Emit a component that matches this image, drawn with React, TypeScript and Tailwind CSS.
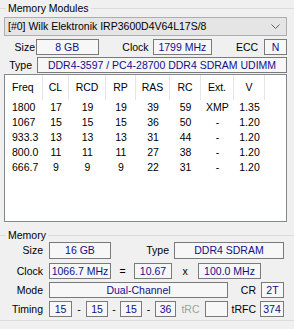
import React from "react";

const font = { fontFamily: '"Liberation Sans", Arial, sans-serif' };

const Box = ({ children, className = "" }: { children?: React.ReactNode; className?: string }) => (
  <div
    className={`h-full flex items-center justify-center border border-[#7a7a7a] bg-[#f7f7f7] text-[#10108a] whitespace-nowrap ${className}`}
  >
    {children}
  </div>
);

const Label = ({ children, className = "" }: { children: React.ReactNode; className?: string }) => (
  <span className={`shrink-0 whitespace-nowrap text-black ${className}`}>{children}</span>
);

const cols = ["Freq", "CL", "RCD", "RP", "RAS", "RC", "Ext.", "V"];
const widths = ["w-[38px]", "w-[26px]", "w-[37px]", "w-[30px]", "w-[34px]", "w-[31px]", "w-[33px]", "w-[31px]"];
const rows = [
  ["1800", "17", "19", "19", "39", "59", "XMP", "1.35"],
  ["1067", "15", "15", "15", "36", "50", "-", "1.20"],
  ["933.3", "13", "13", "13", "31", "44", "-", "1.20"],
  ["800.0", "11", "11", "11", "27", "38", "-", "1.20"],
  ["666.7", "9", "9", "9", "22", "31", "-", "1.20"],
];

export default function App() {
  return (
    <div className="w-[294px] h-[329px] bg-[#f0f0f0] text-[10.5px] leading-none overflow-hidden" style={font}>
      {/* Memory Modules */}
      <div className="relative h-[17px] flex items-center">
        <div className="absolute left-0 right-0 top-[8px] h-px bg-[#dcdcdc]" />
        <span className="relative ml-[6px] px-[2px] bg-[#f0f0f0] text-black">Memory Modules</span>
      </div>
      <div className="ml-[4px] w-[283px]">
        <div className="h-[19px] flex items-center justify-between border border-[#adadad] bg-[#e5e5e5] pl-[3px] pr-[6px]">
          <span className="text-black">[#0] Wilk Elektronik IRP3600D4V64L17S/8</span>
          <svg width="9" height="5" viewBox="0 0 9 5">
            <path d="M0.5 0.5 L4.5 4.5 L8.5 0.5" fill="none" stroke="#606060" strokeWidth="1" />
          </svg>
        </div>

        <div className="mt-[3px] h-[16px] flex items-center">
          <Label className="w-[31px] text-right">Size</Label>
          <div className="ml-[1px] w-[63px] h-full"><Box>8 GB</Box></div>
          <Label className="w-[50px] text-right">Clock</Label>
          <div className="ml-[4px] w-[60px] h-full"><Box>1799 MHz</Box></div>
          <Label className="w-[46px] text-right">ECC</Label>
          <div className="ml-[6px] w-[23px] h-full"><Box>N</Box></div>
        </div>

        <div className="mt-[2px] h-[16px] flex items-center">
          <Label className="w-[28px] text-right">Type</Label>
          <div className="ml-[5px] flex-1 h-full"><Box>DDR4-3597 / PC4-28700 DDR4 SDRAM UDIMM</Box></div>
        </div>

        <div className="mt-[1px] h-[148px] border border-[#828790] bg-white">
          <div className="flex h-[25px]">
            {cols.map((c, i) => (
              <div
                key={c}
                className={`${widths[i]} h-full flex items-center border-r border-[#e5e5e5] text-black ${i === 0 ? "pl-[7px]" : "justify-center"}`}
              >
                {c}
              </div>
            ))}
          </div>
          {rows.map((r) => (
            <div key={r[0]} className="flex h-[15px]">
              {r.map((v, i) => (
                <div
                  key={i}
                  className={`${widths[i]} h-full flex items-center text-black ${i === 0 ? "pl-[7px]" : "justify-center"}`}
                >
                  {v}
                </div>
              ))}
            </div>
          ))}
        </div>
      </div>

      {/* Memory */}
      <div className="relative mt-[6px] h-[14px] flex items-center">
        <div className="absolute left-0 right-0 top-[7px] h-px bg-[#dcdcdc]" />
        <span className="relative ml-[6px] px-[2px] bg-[#f0f0f0] text-black">Memory</span>
      </div>

      <div className="w-[294px]">
        <div className="h-[17px] flex items-center">
          <Label className="w-[43px] text-right">Size</Label>
          <div className="ml-[6px] w-[62px] h-full"><Box>16 GB</Box></div>
          <Label className="w-[58px] text-right">Type</Label>
          <div className="ml-[5px] w-[110px] h-full"><Box>DDR4 SDRAM</Box></div>
        </div>

        <div className="mt-[4px] h-[16px] flex items-center">
          <Label className="w-[43px] text-right">Clock</Label>
          <div className="ml-[6px] w-[62px] h-full"><Box>1066.7 MHz</Box></div>
          <Label className="w-[23px] text-center">=</Label>
          <div className="w-[38px] h-full"><Box>10.67</Box></div>
          <Label className="w-[26px] text-center">x</Label>
          <div className="w-[63px] h-full"><Box>100.0 MHz</Box></div>
        </div>

        <div className="mt-[3px] h-[16px] flex items-center">
          <Label className="w-[43px] text-right">Mode</Label>
          <div className="ml-[6px] w-[179px] h-full"><Box>Dual-Channel</Box></div>
          <Label className="w-[28px] text-right">CR</Label>
          <div className="ml-[5px] w-[23px] h-full"><Box>2T</Box></div>
        </div>

        <div className="mt-[3px] h-[16px] flex items-center">
          <Label className="w-[43px] text-right">Timing</Label>
          <div className="ml-[6px] w-[23px] h-full"><Box>15</Box></div>
          <Label className="w-[14px] text-center">-</Label>
          <div className="w-[22px] h-full"><Box>15</Box></div>
          <Label className="w-[12px] text-center">-</Label>
          <div className="w-[22px] h-full"><Box>15</Box></div>
          <Label className="w-[13px] text-center">-</Label>
          <div className="w-[21px] h-full"><Box>36</Box></div>
          <span className="w-[29px] text-center text-[#a0a0a0]">tRC</span>
          <div className="w-[23px] h-full"><Box /></div>
          <Label className="w-[28px] text-right">tRFC</Label>
          <div className="ml-[4px] w-[24px] h-full"><Box>374</Box></div>
        </div>

        <div className="mt-[3px] h-px bg-[#dcdcdc]" />
      </div>
    </div>
  );
}
